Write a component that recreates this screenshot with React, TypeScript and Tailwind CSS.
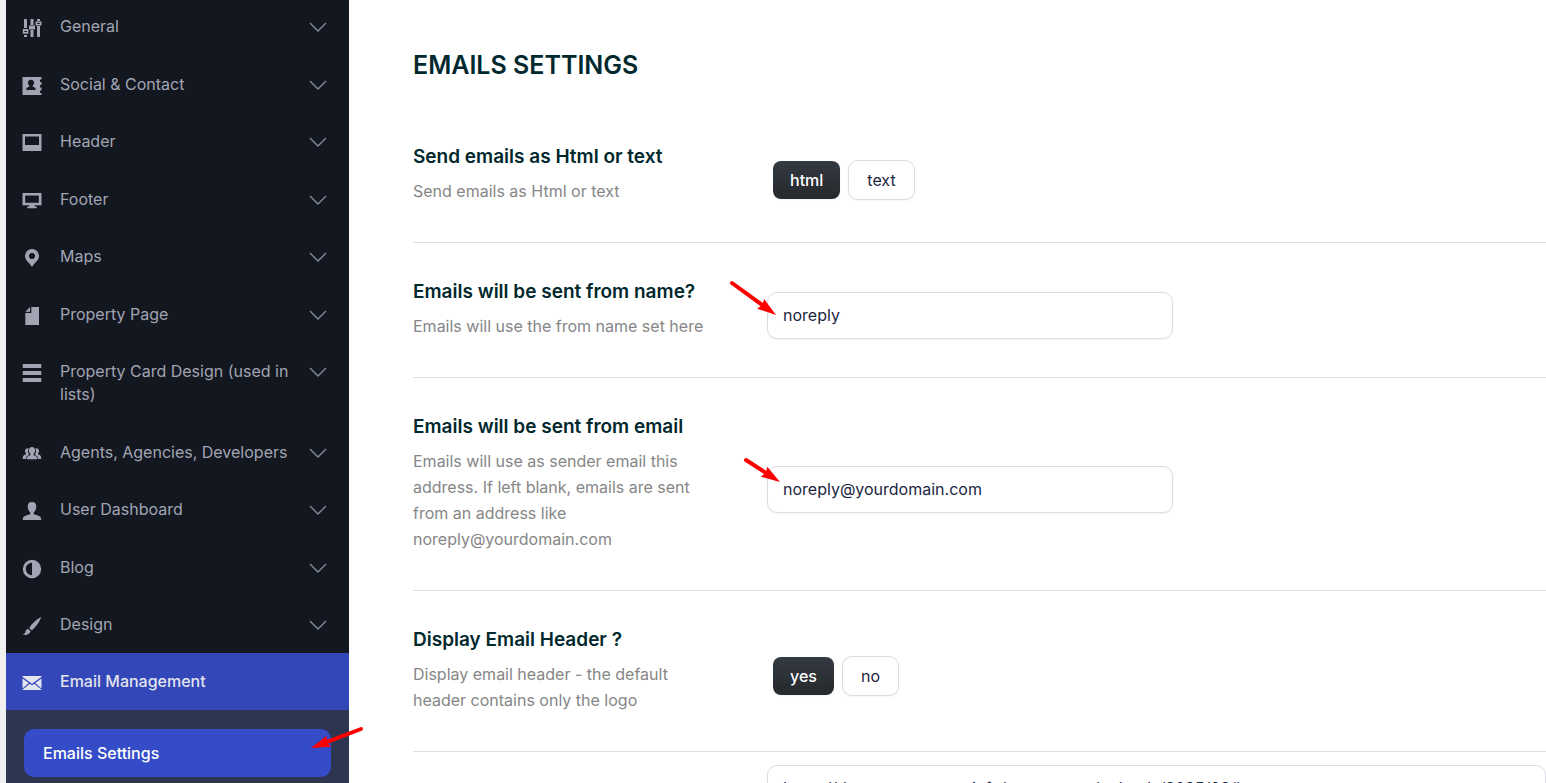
import { useState, type ReactNode } from "react";

const icons: Record<string, ReactNode> = {
  sliders: (
    <>
      <path d="M2 1h3v9H2zM2 17h3v2H2zM8.5 1h3v6h-3zM8.5 12h3v7h-3zM15 1h3v2h-3zM15 8h3v11h-3z" />
      <path d="M.8 11h5.600v4.800H.8zM7 7.500h6v4H7zM13.500 3.500h6v4h-6z" />
      <path d="M2.300 12.900h2.600v1H2.300zM15.200 5h2.600v1h-2.600z" fill="#131720" />
    </>
  ),
  contact: (
    <path
      fillRule="evenodd"
      d="M.5 1h19v2.500h-1.500V6H19.500v3h-1.500v2.500H19.500v3h-1.500V17H19.500v2H.5zM9 3.800c-1.800 0-3 1.200-3 3 0 1.400.6 2.300 1.400 3v1C5.500 11.200 4.300 11.800 4.300 14h9.400c0-2.200-1.200-2.800-3.100-3.200v-1c.8-.7 1.400-1.600 1.400-3 0-1.800-1.200-3-3-3z"
    />
  ),
  header: <path fillRule="evenodd" d="M.5 1h19v17H.5zM3 3.500V12h14V3.500z" />,
  monitor: <path fillRule="evenodd" d="M.5 2h19v12.200h-6.800v1.300h2v1.700h-9.400v-1.700h2v-1.300H.5zM3.200 4.500v7.200h13.600V4.500z" />,
  pin: (
    <path
      fillRule="evenodd"
      d="M10 1a7 7 0 0 0-7 7c0 4.200 4.500 6.800 7 11 2.500-4.200 7-6.800 7-11a7 7 0 0 0-7-7zm0 4a3 3 0 1 1 0 6 3 3 0 0 1 0-6z"
    />
  ),
  page: <path d="M9.300 1H17v18H3.300V7h6zM8 1v4.700H3.300z" />,
  lines: <path d="M.7 1h18.600v4H.7zM.7 8h18.600v4H.7zM.7 15h18.600v4H.7z" />,
  group: (
    <>
      <path d="M5.800 4.200c-1.700 0-2.800 1-2.800 2.700 0 1.500.7 2.200 1.100 2.700v.7C2 11.200.7 11.500.7 14.900H4c.2-2.400 1.400-3.200 3-3.800V10C5.800 8.500 5.600 6.600 6.800 4.400zM14.200 4.200c1.700 0 2.800 1 2.800 2.700 0 1.500-.7 2.200-1.100 2.700v.7c2.100.9 3.400 1.200 3.400 4.600H16c-.2-2.400-1.400-3.200-3-3.800V10c1.200-1.500 1.400-3.400.2-5.600z" />
      <path d="M10 3c-2 0-3.100 1.400-3.100 3.200 0 1.600.6 2.700 1.400 3.400v1.600c-2.100.6-3.600 1.200-3.600 4h10.600c0-2.800-1.500-3.400-3.600-4V9.600c.8-.7 1.400-1.800 1.400-3.400C13.100 4.400 12 3 10 3z" />
    </>
  ),
  user: (
    <path d="M10 1C7.300 1 5.700 2.500 5.700 5.300c0 2.600 1 4.700 2.500 6v2C4.500 14.500.7 14.600.7 19h18.600c0-4.400-3.800-4.500-7.500-5.700v-2c1.500-1.300 2.500-3.400 2.500-6C14.300 2.500 12.700 1 10 1z" />
  ),
  contrast: (
    <path
      fillRule="evenodd"
      d="M10 .8a9.200 9.200 0 1 0 0 18.400A9.200 9.200 0 0 0 10 .8zm0 3v12.400a6.200 6.200 0 0 1 0-12.400z"
    />
  ),
  brush: (
    <path d="M19.300 1C15 3 10 7.300 7.300 12l2.500 2.400C14 10.800 17.500 6 19.300 1zM6.400 13c-2 .1-2.700 1.400-3 2.900-.2 1.200-1.100 2-2.700 2.500 2.600 1 6.400.6 8-2.900z" />
  ),
  mail: (
    <>
      <path d="M.5 3h19v1L10 10.800.5 4zM.5 5.400l6.200 4.700L.5 15.500zM19.500 5.400v10.100l-6.200-5.400z" />
      <path d="M.5 17v-.3l7.200-6L10 12.300l2.300-1.600 7.200 6v.3z" />
    </>
  ),
};

const menu = [
  { label: "General", icon: "sliders" },
  { label: "Social & Contact", icon: "contact" },
  { label: "Header", icon: "header" },
  { label: "Footer", icon: "monitor" },
  { label: "Maps", icon: "pin" },
  { label: "Property Page", icon: "page" },
  { label: "Property Card Design (used in lists)", icon: "lines" },
  { label: "Agents, Agencies, Developers", icon: "group" },
  { label: "User Dashboard", icon: "user" },
  { label: "Blog", icon: "contrast" },
  { label: "Design", icon: "brush" },
];

function MenuIcon({ name }: { name: string }) {
  return (
    <svg viewBox="0 0 20 20" fill="currentColor" className="w-5 h-5 mt-[3px] shrink-0" aria-hidden="true">
      {icons[name]}
    </svg>
  );
}

function Chevron() {
  return (
    <svg
      viewBox="0 0 18 10"
      fill="none"
      stroke="#858b9b"
      strokeWidth="1.4"
      className="w-[18px] h-[10px] mt-[7px] shrink-0"
      aria-hidden="true"
    >
      <path d="M1 1l8 8 8-8" />
    </svg>
  );
}

// Red pointer from (x1, y1) to the tip at (x2, y2)
function Arrow({ x1, y1, x2, y2, className }: { x1: number; y1: number; x2: number; y2: number; className: string }) {
  const len = Math.hypot(x2 - x1, y2 - y1);
  const ux = (x2 - x1) / len;
  const uy = (y2 - y1) / len;
  const bx = x2 - ux * 19;
  const by = y2 - uy * 19;
  return (
    <svg
      viewBox="0 0 50 40"
      className={`absolute w-[50px] h-10 overflow-visible pointer-events-none ${className}`}
      aria-hidden="true"
    >
      <path d={`M${x1} ${y1}L${bx + ux * 3} ${by + uy * 3}`} stroke="#ff0000" strokeWidth="4" strokeLinecap="round" />
      <path
        d={`M${x2} ${y2}L${bx - uy * 6} ${by + ux * 6}L${bx + ux * 2} ${by + uy * 2}L${bx + uy * 6} ${by - ux * 6}z`}
        fill="#ff0000"
      />
    </svg>
  );
}

function Row({ title, text, htmlFor, children }: { title: string; text: string; htmlFor?: string; children: ReactNode }) {
  return (
    <section className="flex items-center border-b border-[#dcdfe4] pt-9 pb-[38px]">
      <div className="w-[296px] mr-[58px] shrink-0">
        <h2 className="text-[19px] leading-[26px] font-semibold text-[#00282d]">
          {htmlFor ? <label htmlFor={htmlFor}>{title}</label> : title}
        </h2>
        <p className="mt-2 text-base leading-[26px] text-[#868686]">{text}</p>
      </div>
      <div className="mt-3">{children}</div>
    </section>
  );
}

function Toggle({ options, label }: { options: string[]; label: string }) {
  const [value, setValue] = useState(options[0]);
  return (
    <div role="group" aria-label={label} className="flex items-center gap-2 ml-1.5">
      {options.map((o) => (
        <button
          key={o}
          type="button"
          aria-pressed={o === value}
          onClick={() => setValue(o)}
          className={
            o === value
              ? "h-[38px] px-[17px] rounded-lg text-base font-medium text-white bg-linear-to-b from-[#343a42] to-[#25292c] shadow-xs"
              : "h-10 px-[18px] rounded-[10px] text-base text-[#1c2640] bg-white border border-[#dcdce6] shadow-xs"
          }
        >
          {o}
        </button>
      ))}
    </div>
  );
}

const field =
  "px-[15px] rounded-[10px] border border-[#dcdce6] bg-white text-base text-[#1c2640] shadow-xs outline-none";

export default function App() {
  const [name, setName] = useState("noreply");
  const [email, setEmail] = useState("noreply@yourdomain.com");
  const [logo, setLogo] = useState("https://demo.wpsources.info/wp-content/uploads/2025/09/logo.png");

  return (
    <div className="flex h-screen overflow-hidden bg-white font-['Inter',sans-serif]">
      <aside className="w-[349px] shrink-0 border-l-6 border-[#f0f0f1] bg-[#131720]">
        <nav className="-mt-[3px]">
          <ul>
            {menu.map((m) => (
              <li key={m.label} className="odd:pb-px">
                <button
                  type="button"
                  className="flex items-start w-full pl-4 pr-[22px] pt-[18px] pb-4 text-left text-base leading-[23px] text-[#a1a5b3]"
                >
                  <MenuIcon name={m.icon} />
                  <span className="flex-1 ml-[18px] pr-3">{m.label}</span>
                  <Chevron />
                </button>
              </li>
            ))}
            <li>
              <button
                type="button"
                aria-expanded="true"
                className="flex items-start w-full pl-4 pr-[22px] py-[17px] text-left text-base leading-[23px] font-medium text-[#e2e4ee] bg-[#3347b8]"
              >
                <MenuIcon name="mail" />
                <span className="ml-[18px]">Email Management</span>
              </button>
              <div className="relative bg-[#2d3550] px-[18px] pt-[19px] pb-5">
                <a
                  href="#emails-settings"
                  className="block rounded-[10px] bg-[#354cc8] px-[19px] py-[13px] text-base leading-[22px] font-medium text-white"
                >
                  Emails Settings
                </a>
                <Arrow x1={48} y1={10} x2={-2} y2={29} className="left-[307px] top-[9px]" />
              </div>
            </li>
          </ul>
        </nav>
      </aside>

      <main id="emails-settings" className="flex-1 min-w-0 pl-16 pt-[49px]">
        <h1 className="text-[25px] leading-8 font-semibold text-[#00282d] mb-[27px]">EMAILS SETTINGS</h1>

        <Row title="Send emails as Html or text" text="Send emails as Html or text">
          <Toggle options={["html", "text"]} label="Send emails as Html or text" />
        </Row>
        <Row title="Emails will be sent from name?" text="Emails will use the from name set here" htmlFor="from-name">
          <div className="relative w-[406px]">
            <input
              id="from-name"
              value={name}
              onChange={(e) => setName(e.target.value)}
              className={`w-full h-[47px] ${field}`}
            />
            <Arrow x1={5} y1={5} x2={49} y2={37} className="-left-10 -top-3.5" />
          </div>
        </Row>
        <Row
          title="Emails will be sent from email"
          text="Emails will use as sender email this address. If left blank, emails are sent from an address like noreply@yourdomain.com"
          htmlFor="from-email"
        >
          <div className="relative w-[406px]">
            <input
              id="from-email"
              value={email}
              onChange={(e) => setEmail(e.target.value)}
              className={`w-full h-[47px] ${field}`}
            />
            <Arrow x1={19} y1={8} x2={53} y2={30} className="-left-10 -top-3.5" />
          </div>
        </Row>
        <Row title="Display Email Header ?" text="Display email header - the default header contains only the logo">
          <Toggle options={["yes", "no"]} label="Display Email Header ?" />
        </Row>
        <div className="pt-[13px] pl-[354px]">
          <input
            aria-label="Email logo"
            value={logo}
            onChange={(e) => setLogo(e.target.value)}
            className={`w-full h-[46px] ${field}`}
          />
        </div>
      </main>
    </div>
  );
}
